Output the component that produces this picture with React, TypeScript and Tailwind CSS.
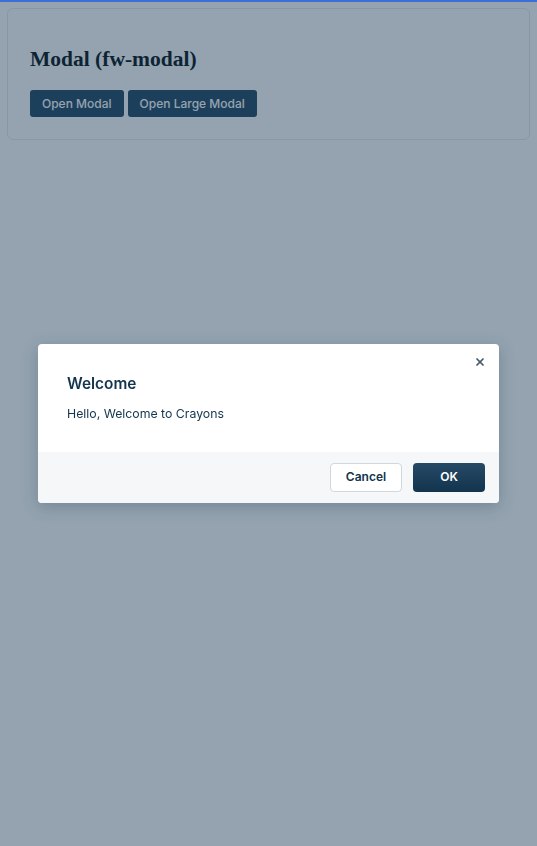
import { X } from "lucide-react"

function App() {
  return (
    <div className="relative min-h-[846px] w-full bg-white" style={{ fontFamily: "Inter, 'Noto Sans', sans-serif" }}>
      <div className="h-[2px] w-full bg-[#2c5cc5]" />

      {/* Page content */}
      <div className="px-[7px] pt-[6px]">
        <div className="rounded-md border border-[#e6eaee] bg-white px-[22px] pb-[22px] pt-[38px]">
          <h2 className="text-[21.5px] font-bold leading-6 text-[#0b1620]" style={{ fontFamily: "'Liberation Serif', serif" }}>
            Modal (fw-modal)
          </h2>
          <div className="mt-[19px] flex gap-1">
            <button className="h-[27px] rounded-[3px] bg-[#264966] px-3 text-[12px] font-medium text-white">Open Modal</button>
            <button className="h-[27px] rounded-[3px] bg-[#264966] px-3 text-[12px] font-medium text-white">Open Large Modal</button>
          </div>
        </div>
      </div>

      {/* Overlay */}
      <div className="fixed inset-0 flex items-center justify-center bg-[#12344d]/45">
        <div className="w-[461px] overflow-hidden rounded-[4px] bg-white shadow-[0_4px_16px_rgba(18,52,77,0.25)]">
          <div className="relative px-[29px] pb-[28px] pt-[30px]">
            <button className="absolute right-[9px] top-[8px] flex h-5 w-5 items-center justify-center text-[#475867]">
              <X size={12} strokeWidth={3.5} />
            </button>
            <h3 className="text-[15.4px] font-semibold leading-5 text-[#12344d]">Welcome</h3>
            <p className="mt-[10px] text-[12.3px] leading-5 text-[#12344d]">Hello, Welcome to Crayons</p>
          </div>
          <div className="flex justify-end gap-[11px] bg-[#f5f7f9] px-[14px] py-[11px]">
            <button className="h-[29px] w-[72px] rounded-[4px] border border-[#cfd7df] bg-white text-[12px] font-semibold text-[#12344d]">
              Cancel
            </button>
            <button className="h-[29px] w-[72px] rounded-[4px] bg-gradient-to-b from-[#264966] to-[#12344d] text-[12px] font-semibold text-white">
              OK
            </button>
          </div>
        </div>
      </div>

      {/* Top accent line above overlay */}
      <div className="fixed left-0 right-0 top-0 h-[2px] bg-[#3a6fd6]" />
    </div>
  )
}

export default App
